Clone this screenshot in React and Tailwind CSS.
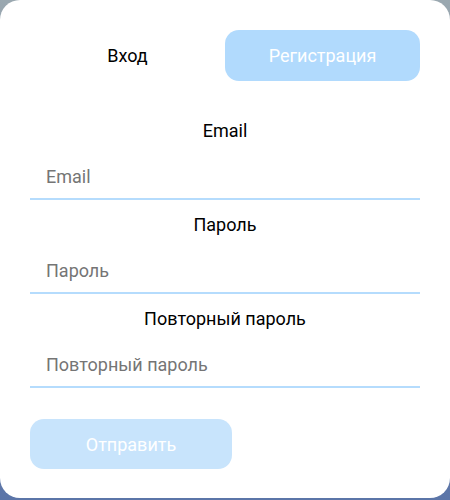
import React, { useState } from "react";

function Field({ label, type = "text", value, onChange }) {
  return (
    <div className="flex flex-col">
      <label className="h-6 text-center text-[18px] leading-6 text-black">{label}</label>
      <input
        type={type}
        placeholder={label}
        value={value}
        onChange={onChange}
        className="mt-[15px] h-[42px] border-b-2 border-[#b5dcfd] px-4 pb-1 text-[18px] text-black outline-none placeholder:text-[#757575]"
      />
    </div>
  );
}

export default function App() {
  const [tab, setTab] = useState("register");
  const [form, setForm] = useState({ email: "", password: "", repeat: "" });

  return (
    <div
      className="h-[500px] w-full bg-gradient-to-b from-[#9aa8b0] via-[#7d86a6] to-[#5b75a8]"
      style={{ fontFamily: "Roboto, 'Noto Sans', sans-serif" }}
    >
      {/* card */}
      <div className="h-[498px] w-full rounded-[20px] bg-white px-[30px] pt-[30px]">
        <div className="grid grid-cols-2">
          <button
            onClick={() => setTab("login")}
            className="h-[51px] rounded-[14px] text-[18px] text-black"
          >
            Вход
          </button>
          <button
            onClick={() => setTab("register")}
            className="h-[51px] rounded-[14px] bg-[#b1dafd] text-[18px] text-white"
          >
            Регистрация
          </button>
        </div>

        <div className="mt-[38px] flex flex-col gap-[13px]">
          <Field
            label="Email"
            value={form.email}
            onChange={(e) => setForm({ ...form, email: e.target.value })}
          />
          <Field
            label="Пароль"
            type="password"
            value={form.password}
            onChange={(e) => setForm({ ...form, password: e.target.value })}
          />
          <Field
            label="Повторный пароль"
            type="password"
            value={form.repeat}
            onChange={(e) => setForm({ ...form, repeat: e.target.value })}
          />
        </div>

        <button className="mt-[31px] h-[50px] w-[202px] rounded-[14px] bg-[#c8e4fc] text-[18px] text-white">
          Отправить
        </button>
      </div>
    </div>
  );
}
